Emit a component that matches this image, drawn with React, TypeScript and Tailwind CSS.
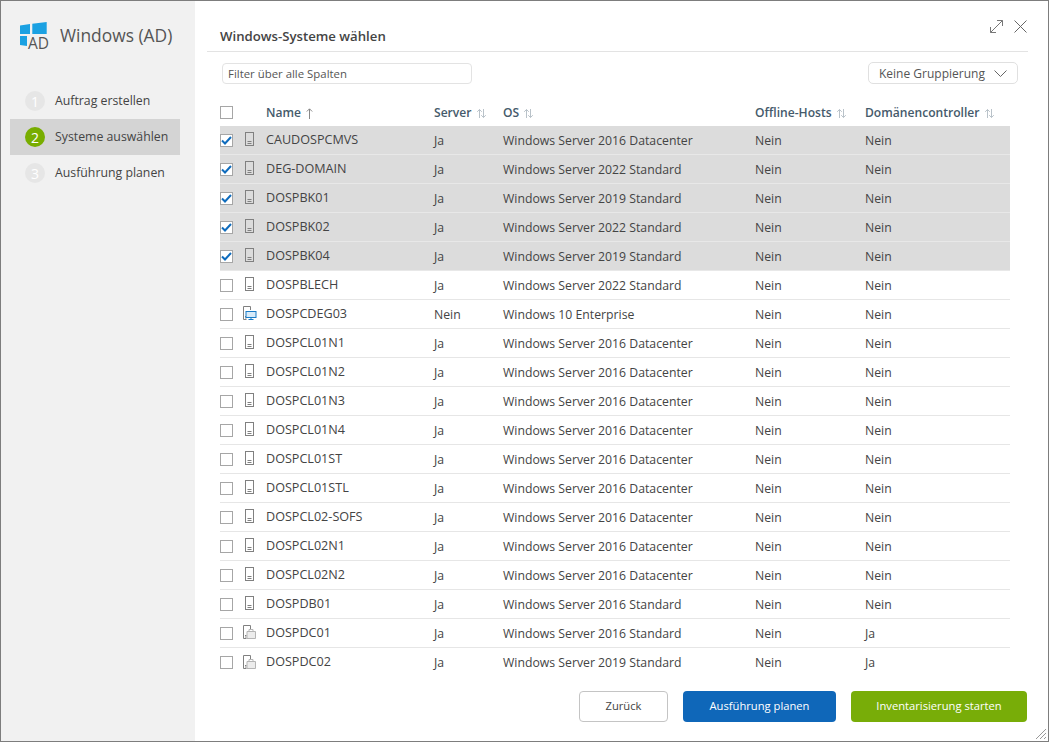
import React from "react";

type R = { n: string; s: string; o: string; d: string; i?: "pc" | "dc"; c?: boolean };
const D16 = "Windows Server 2016 Datacenter";
const S22 = "Windows Server 2022 Standard";
const S19 = "Windows Server 2019 Standard";
const S16 = "Windows Server 2016 Standard";
const rows: R[] = [
  { n: "CAUDOSPCMVS", s: "Ja", o: D16, d: "Nein", c: true },
  { n: "DEG-DOMAIN", s: "Ja", o: S22, d: "Nein", c: true },
  { n: "DOSPBK01", s: "Ja", o: S19, d: "Nein", c: true },
  { n: "DOSPBK02", s: "Ja", o: S22, d: "Nein", c: true },
  { n: "DOSPBK04", s: "Ja", o: S19, d: "Nein", c: true },
  { n: "DOSPBLECH", s: "Ja", o: S22, d: "Nein" },
  { n: "DOSPCDEG03", s: "Nein", o: "Windows 10 Enterprise", d: "Nein", i: "pc" },
  { n: "DOSPCL01N1", s: "Ja", o: D16, d: "Nein" },
  { n: "DOSPCL01N2", s: "Ja", o: D16, d: "Nein" },
  { n: "DOSPCL01N3", s: "Ja", o: D16, d: "Nein" },
  { n: "DOSPCL01N4", s: "Ja", o: D16, d: "Nein" },
  { n: "DOSPCL01ST", s: "Ja", o: D16, d: "Nein" },
  { n: "DOSPCL01STL", s: "Ja", o: D16, d: "Nein" },
  { n: "DOSPCL02-SOFS", s: "Ja", o: D16, d: "Nein" },
  { n: "DOSPCL02N1", s: "Ja", o: D16, d: "Nein" },
  { n: "DOSPCL02N2", s: "Ja", o: D16, d: "Nein" },
  { n: "DOSPDB01", s: "Ja", o: S16, d: "Nein" },
  { n: "DOSPDC01", s: "Ja", o: S16, d: "Ja", i: "dc" },
  { n: "DOSPDC02", s: "Ja", o: S19, d: "Ja", i: "dc" },
];

const grid = "grid grid-cols-[46px_168px_69px_252px_110px_145px] items-center";

function Sort() {
  return (
    <svg width="11" height="11" viewBox="0 0 11 11" className="ml-[4px] inline-block" fill="none" stroke="#b9c2c9" strokeWidth="1">
      <path d="M3.5 10V1.5M1.2 3.8 3.5 1.5 5.8 3.8M7.5 1v8.5M5.2 7.2 7.5 9.5 9.8 7.2" />
    </svg>
  );
}

function Box({ c }: { c?: boolean }) {
  return (
    <span className="flex h-[13px] w-[13px] items-center justify-center border border-[#a6a6a6] bg-white">
      {c && (
        <svg width="11" height="9" viewBox="0 0 11 9" fill="none" stroke="#0f6cbd" strokeWidth="2">
          <path d="M1 4.5 4 7.5 10 1" />
        </svg>
      )}
    </span>
  );
}

function RowIcon({ i }: { i?: "pc" | "dc" }) {
  if (i === "pc")
    return (
      <svg width="15" height="14" viewBox="0 0 15 14" fill="none" className="-ml-[1px]">
        <path d="M3.5 13.5H.5V.5h7V4" stroke="#808080" />
        <path d="M2 10.5h1.5M2 12h1.5" stroke="#808080" />
        <rect x="3" y="5.5" width="10" height="6" fill="#d8ebf9" stroke="#1a7cc7" />
        <path d="M5.5 13.5h5M8 11.5v2" stroke="#1a7cc7" />
      </svg>
    );
  if (i === "dc")
    return (
      <svg width="15" height="14" viewBox="0 0 15 14" fill="none" className="-ml-[1px]">
        <path d="M3.5 13.5H.5V.5h7V4" stroke="#808080" />
        <path d="M2 10.5h1.5M2 12h1.5" stroke="#808080" />
        <path d="M4 6.5h8.5v7H4z" fill="#ececec" stroke="#b5b5b5" />
        <path d="M6 6.5V4.5h4v2" stroke="#b5b5b5" />
      </svg>
    );
  return (
    <svg width="9" height="14" viewBox="0 0 9 14" fill="none" className="ml-[1px]" stroke="#808080">
      <rect x=".5" y=".5" width="8" height="13" />
      <path d="M2.5 9.5h4M2.5 11.5h4" />
    </svg>
  );
}

function Step({ n, label, active }: { n: string; label: string; active?: boolean }) {
  return (
    <div className={`flex h-[36px] items-center pl-[15px] ${active ? "bg-[#d4d4d4]" : ""}`}>
      <span className={`flex h-[20px] w-[20px] items-center justify-center rounded-full text-[14px] ${active ? "bg-[#78ad00] text-white" : "bg-[#e6e6e6] text-white"}`}>
        {n}
      </span>
      <span className="ml-[10px] text-[12.3px] text-[#444]">{label}</span>
    </div>
  );
}

export default function App() {
  return (
    <div className="flex h-[742px] w-[1049px] overflow-hidden border border-[#7d7d7d] bg-white text-[12.25px] text-[#444] [font-family:'Open_Sans','Noto_Sans',sans-serif]">
      <aside className="w-[194px] shrink-0 bg-[#f1f1f1] pl-[9px] pr-[15px]">
        <div className="flex h-[71px] items-start pl-[10px] pt-[21px]">
          <span className="relative h-[29px] w-[32px]">
            <svg width="27" height="24" viewBox="0 0 27 24" fill="#1ba1e2">
              <path d="M0 3.5 10 2V12H0zM12.3 1.7 26.7 0V12H12.3zM0 14h7v10L0 23z" />
            </svg>
            <span className="absolute left-[8px] top-[13px] text-[15.5px] leading-[17px] text-[#555]">AD</span>
          </span>
          <span className="ml-[8px] text-[17.4px] leading-[26px] text-[#555]">Windows (AD)</span>
        </div>
        <div className="pt-[11px]">
          <Step n="1" label="Auftrag erstellen" />
          <Step n="2" label="Systeme auswählen" active />
          <Step n="3" label="Ausführung planen" />
        </div>
      </aside>
      <main className="relative flex min-w-0 flex-1 flex-col">
        <div className="mx-[12px] mr-[20px] flex h-[51px] items-end border-b border-[#e3e3e3] pb-[4px] pl-[13px]">
          <h1 className="text-[13.2px] font-semibold text-[#444]">Windows-Systeme wählen</h1>
        </div>
        <div className="absolute right-[21px] top-[19px] flex items-center gap-[11px]">
          <svg width="13" height="13" viewBox="0 0 13 13" fill="none" stroke="#777">
            <path d="M.5 12.5 12.5.5M7 .5h5.5V6M.5 7v5.5H6" />
          </svg>
          <svg width="13" height="13" viewBox="0 0 13 13" fill="none" stroke="#666">
            <path d="M.5.5 12.5 12.5M12.5.5 .5 12.5" />
          </svg>
        </div>
        <div className="flex items-center justify-between pl-[27px] pr-[30px] pt-[10px]">
          <div className="flex h-[21px] w-[250px] items-center rounded-[4px] border border-[#e3e3e3] pl-[5px] pt-[1px] text-[11.4px] text-[#555]">Filter über alle Spalten</div>
          <div className="flex h-[22px] w-[150px] items-center justify-between rounded-[5px] border border-[#e0e0e0] pl-[10px] pr-[10px] pt-[1px] text-[12px] text-[#555]">
            <span>Keine Gruppierung</span>
            <svg width="13" height="7" viewBox="0 0 13 7" fill="none" stroke="#666">
              <path d="M.5.5 6.5 6.5 12.5.5" />
            </svg>
          </div>
        </div>
        <div className={`${grid} ml-[25px] mt-[19px] h-[23px] w-[790px] pb-[4px] text-[12.1px] font-semibold text-[#455a6b]`}>
          <span><Box /></span>
          <span className="flex items-center pt-[1px]">
            <span>Name</span>
            <svg width="7" height="11" viewBox="0 0 7 11" fill="none" stroke="#888" className="ml-[5px]">
              <path d="M3.5 11V1M.8 3.5 3.5.8 6.2 3.5" />
            </svg>
          </span>
          <span className="flex items-center pt-[1px]">Server<Sort /></span>
          <span className="flex items-center pt-[1px]">OS<Sort /></span>
          <span className="flex items-center pt-[1px]">Offline-Hosts<Sort /></span>
          <span className="flex items-center pt-[1px]">Domänencontroller<Sort /></span>
        </div>
        <div className="ml-[25px] w-[790px]">
          {rows.map((r, idx) => (
            <div key={r.n} className={`${grid} h-[29px] ${idx === rows.length - 1 ? "" : "border-b"} ${r.c ? "border-[#e8e8e8] bg-[#dcdcdc]" : "border-[#e6e6e6]"}`}>
              <span className="flex items-center">
                <Box c={r.c} />
                <span className="ml-[11px] -translate-y-[1px]"><RowIcon i={r.i} /></span>
              </span>
              <span className="text-[12.6px]">{r.n}</span>
              <span className="pt-[2px]">{r.s}</span>
              <span className="pt-[2px]">{r.o}</span>
              <span className="pt-[2px]">Nein</span>
              <span className="pt-[2px]">{r.d}</span>
            </div>
          ))}
        </div>
        <div className="flex flex-1 items-start justify-end gap-[15px] pr-[21px] pt-[14px] text-[11.2px]">
          <button className="h-[31px] w-[89px] rounded-[4px] border border-[#c4c4c4] bg-white text-[#444]">Zurück</button>
          <button className="h-[31px] w-[153px] rounded-[4px] bg-[#0f67b9] text-white">Ausführung planen</button>
          <button className="h-[31px] w-[176px] rounded-[4px] bg-[#78ad08] text-white">Inventarisierung starten</button>
        </div>
        <svg width="12" height="12" viewBox="0 0 12 12" className="absolute bottom-[1px] right-[1px]" stroke="#999" fill="none">
          <path d="M1 11 11 1M5 11 11 5M9 11 11 9" />
        </svg>
      </main>
    </div>
  );
}
